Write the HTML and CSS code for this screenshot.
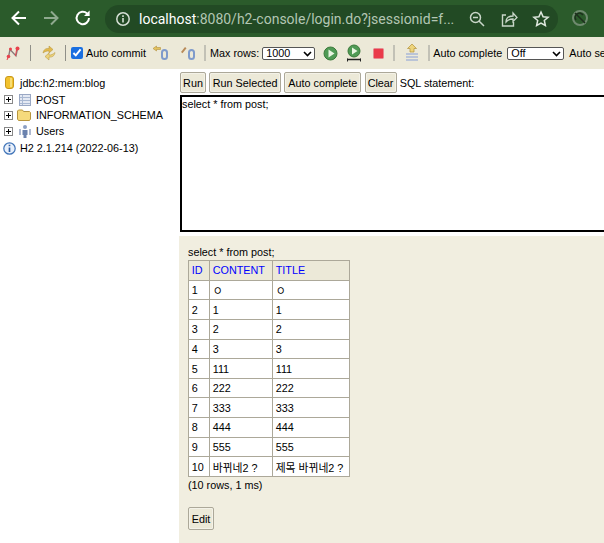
FILE: index.html
```html
<!DOCTYPE html>
<html lang="en">
<head>
<meta charset="utf-8">
<title>H2 Console</title>
<link rel="stylesheet" href="styles.css">
</head>
<body>
<header class="chrome">
  <svg class="nav-icon" width="20" height="20" viewBox="0 0 20 20"><path d="M17 10H4M10 3.500 3.500 10l6.500 6.500" fill="none" stroke="#fff" stroke-width="2"/></svg>
  <svg class="nav-icon" width="20" height="20" viewBox="0 0 20 20"><path d="M3 10h13M10 3.500l6.500 6.500-6.500 6.500" fill="none" stroke="#8fa98f" stroke-width="2"/></svg>
  <svg class="nav-icon" width="20" height="20" viewBox="0 0 20 20"><path d="M16 10a6.200 6.200 0 1 1-1.900-4.500" fill="none" stroke="#fff" stroke-width="2"/><path d="M16.600 2.500v5.600H11z" fill="#fff"/></svg>
  <div class="omnibox">
    <svg class="info" width="16" height="16" viewBox="0 0 16 16"><circle cx="8" cy="8" r="6.200" fill="none" stroke="#d5dfd5" stroke-width="1.500"/><path d="M8 7v4.500M8 4.300v1.600" stroke="#d5dfd5" stroke-width="1.600"/></svg>
    <span class="url"><span class="host">localhost</span>:8080/h2-console/login.do?jsessionid=f...</span>
    <svg class="omni-icon" width="18" height="18" viewBox="0 0 18 18"><circle cx="7.500" cy="7.500" r="5" fill="none" stroke="#c9d6c9" stroke-width="1.500"/><path d="M5 7.500h5M11 11l5 5" stroke="#c9d6c9" stroke-width="1.500"/></svg>
    <svg class="omni-icon" width="18" height="18" viewBox="0 0 18 18"><path d="M6 5H2.500v11h11v-4" fill="none" stroke="#c9d6c9" stroke-width="1.400"/><path d="M6 12c0-4 3-6 7-6V3l4 4.500-4 4V9c-3 0-5 .5-7 3z" fill="none" stroke="#c9d6c9" stroke-width="1.300"/></svg>
    <svg class="omni-icon" width="18" height="18" viewBox="0 0 18 18"><path d="m9 2 2.100 4.700 5 .5-3.800 3.300 1.100 5L9 13l-4.400 2.500 1.100-5L1.900 7.200l5-.5z" fill="none" stroke="#dfe8df" stroke-width="1.500"/></svg>
  </div>
  <svg class="ext-icon" width="20" height="20" viewBox="0 0 20 20"><circle cx="10" cy="10" r="7" fill="none" stroke="#6f8a6f" stroke-width="2"/><path d="M5 5l10 10M6 12a4 4 0 0 1 7-5" fill="none" stroke="#1d2f1d" stroke-width="1.500"/></svg>
</header>

<nav class="toolbar">
  <svg class="tool t-first" width="14" height="14" viewBox="0 0 14 14"><path d="M2.500 11 4 3.500l6 6.500 1.500-7" fill="none" stroke="#8a7a7a" stroke-width="1.300"/><circle cx="2.500" cy="10.500" r="1.800" fill="#e8424c"/><path d="M2 11.500 1 14" stroke="#e8424c"/><circle cx="4.500" cy="3" r="1.500" fill="#e8424c"/><circle cx="11.500" cy="2.500" r="2" fill="#e8424c"/><path d="M10.500 4 9.500 10" stroke="#e8424c"/></svg>
  <i class="sep sep-dark sep-a"></i>
  <svg class="tool t-refresh" width="14" height="16" viewBox="0 0 14 16"><path d="M1 8C1.500 4.500 4 3 7 3.500V1l4 3.500L7 8V6C5 5.700 3 6.500 1 8z" fill="#e2b94c" stroke="#b3923a" stroke-width=".5"/><path d="M13 7.500C12.500 11 10 12.500 7 12v3l-4-3.500L7 8v2c2 .3 4-.8 6-2.500z" fill="#ecd27a" stroke="#b3923a" stroke-width=".5"/></svg>
  <i class="sep sep-dark sep-b"></i>
  <label class="check"><input type="checkbox" checked>Auto commit</label>
  <svg class="tool t-hist" width="16" height="16" viewBox="0 0 16 16"><path d="M0 3.500 3.500 1v1.500h4v2h-4V6z" fill="#e3c25f" stroke="#a8842c" stroke-width=".5"/><rect x="9" y="5" width="5" height="9" rx="2.500" fill="none" stroke="#7f9bcb" stroke-width="2"/></svg>
  <svg class="tool t-hist2" width="16" height="16" viewBox="0 0 16 16"><path d="M1 7l4-5 1.500 1.200-4 5z" fill="#b88a58"/><rect x="9" y="5" width="5" height="9" rx="2.500" fill="none" stroke="#7f9bcb" stroke-width="2"/></svg>
  <i class="sep sep-light sep-c"></i>
  <span class="label">Max rows:</span>
  <span class="select-wrap rows">
    <select class="select"><option>1000</option></select>
    <svg class="chevron" width="9" height="6" viewBox="0 0 9 6"><path d="M1 1l3.500 3.500L8 1" fill="none" stroke="#000" stroke-width="1.600"/></svg>
  </span>
  <svg class="tool t-run" width="15" height="15" viewBox="0 0 15 15"><circle cx="7.500" cy="7.500" r="6.500" fill="#4f9a55" stroke="#3a7a3a"/><path d="M5.500 3.500v8l6-4z" fill="#e9f5e2"/></svg>
  <svg class="tool t-run2" width="18" height="18" viewBox="0 0 18 18"><circle cx="9" cy="7" r="6" fill="#4f9a55" stroke="#3a7a3a"/><path d="M7 3.500v7l5.500-3.500z" fill="#e9f5e2"/><path d="M2 15.500h14" stroke="#222" stroke-width="1.500"/><path d="M2.500 14.500v3M15.500 14.500v3" stroke="#222"/></svg>
  <svg class="tool t-stop" width="11" height="11" viewBox="0 0 11 11"><rect x=".5" y=".5" width="10" height="10" rx="1" fill="#ea3a4a" stroke="#e58a90"/></svg>
  <i class="sep sep-light sep-d"></i>
  <svg class="tool t-up" width="14" height="20" viewBox="0 0 14 20"><path d="M1 11h12M1 14h12M1 17h12" stroke="#a9b8d6" stroke-width="1.500"/><path d="M7 1l4.500 4.500H9v3.500H5V5.500H2.500z" fill="#edd47c" stroke="#b3923a" stroke-width=".7"/></svg>
  <i class="sep sep-light sep-e"></i>
  <span class="label">Auto complete</span>
  <span class="select-wrap off">
    <select class="select"><option>Off</option></select>
    <svg class="chevron" width="9" height="6" viewBox="0 0 9 6"><path d="M1 1l3.500 3.500L8 1" fill="none" stroke="#000" stroke-width="1.600"/></svg>
  </span>
  <span class="label">Auto select</span>
</nav>

<main class="main">
  <aside class="tree">
    <div class="node node-db">
      <svg width="9" height="13" viewBox="0 0 9 13"><rect x=".5" y=".5" width="8" height="12" rx="2.500" fill="#f2c22e" stroke="#c9981c"/><path d="M6 2v9" stroke="#fbe68c" stroke-width="1.500"/></svg>
      <span>jdbc:h2:mem:blog</span>
    </div>
    <div class="node">
      <i class="plus"></i>
      <svg class="ico" width="14" height="12" viewBox="0 0 14 12"><rect x="2.500" y=".5" width="11" height="11" fill="#e4e9f3" stroke="#9aa8c4"/><path d="M3 3.500h10M3 6.500h10M3 9.500h10" stroke="#a9b8d2"/><path d="M5.500 1v10" stroke="#a9b8d2"/></svg>
      <span>POST</span>
    </div>
    <div class="node">
      <i class="plus"></i>
      <svg class="ico" width="14" height="12" viewBox="0 0 14 12"><path d="M.5 10V2l1-1h4l1 1.500h6l1 1V10l-1 1.500h-11z" fill="#f6da7c" stroke="#b8963f"/></svg>
      <span>INFORMATION_SCHEMA</span>
    </div>
    <div class="node">
      <i class="plus"></i>
      <svg class="ico" width="14" height="14" viewBox="0 0 14 14"><circle cx="8" cy="3" r="2" fill="#8b9fc4"/><path d="M5.500 6h5v5h-1v3h-3v-3h-1z" fill="#6b82ae"/><path d="M3 5v6M13 5v6" stroke="#aeb9d0" stroke-width="2"/></svg>
      <span>Users</span>
    </div>
    <div class="node node-ver">
      <svg width="13" height="13" viewBox="0 0 13 13"><circle cx="6.500" cy="6.500" r="5.700" fill="#e8f0fb" stroke="#3f73b8" stroke-width="1.200"/><path d="M6.500 5.500v4.500M6.500 2.700v1.600" stroke="#2e5ea6" stroke-width="1.700"/></svg>
      <span>H2 2.1.214 (2022-06-13)</span>
    </div>
  </aside>
  <section class="work">
    <div class="actions">
      <button class="btn b-run">Run</button>
      <button class="btn b-sel">Run Selected</button>
      <button class="btn b-auto">Auto complete</button>
      <button class="btn b-clear">Clear</button>
      <span class="label">SQL statement:</span>
    </div>
    <div class="sql">select * from post;</div>
    <div class="result">
      <div class="query">select * from post;</div>
      <table class="grid">
        <thead><tr><th>ID</th><th>CONTENT</th><th>TITLE</th></tr></thead>
        <tbody>
          <tr><td>1</td><td>ㅇ</td><td>ㅇ</td></tr>
          <tr><td>2</td><td>1</td><td>1</td></tr>
          <tr><td>3</td><td>2</td><td>2</td></tr>
          <tr><td>4</td><td>3</td><td>3</td></tr>
          <tr><td>5</td><td>111</td><td>111</td></tr>
          <tr><td>6</td><td>222</td><td>222</td></tr>
          <tr><td>7</td><td>333</td><td>333</td></tr>
          <tr><td>8</td><td>444</td><td>444</td></tr>
          <tr><td>9</td><td>555</td><td>555</td></tr>
          <tr><td>10</td><td>바뀌네2 ?</td><td>제목 바뀌네2 ?</td></tr>
        </tbody>
      </table>
      <div class="count">(10 rows, 1 ms)</div>
      <button class="btn btn-edit">Edit</button>
    </div>
  </section>
</main>
</body>
</html>
```

FILE: styles.css
```css
* { box-sizing: border-box; }
html, body { margin: 0; height: 100%; overflow: hidden; }
body {
  width: 604px; height: 543px;
  background: #fff; color: #000;
  font: 10.800px "Liberation Sans", "Noto Sans CJK KR", sans-serif;
  display: flex; flex-direction: column;
}
.chrome {
  height: 37px; flex: none; background: #2b5b2b;
  display: flex; align-items: center; padding: 0 0 1px 9px; gap: 12px;
  overflow: hidden;
}
.nav-icon { flex: none; }
.omnibox {
  flex: none; width: 453px; height: 28px; border-radius: 14px; background: #224a24;
  display: flex; align-items: center; padding: 0 9px 0 10px; margin-left: 0; margin-top: 1px;
}
.info { flex: none; }
.url { flex: 1; margin-left: 8px; font: 14px "Roboto", "Liberation Sans", sans-serif; color: #b3c6b3; white-space: nowrap; }
.host { color: #fff; }
.omni-icon { flex: none; margin-left: 14px; }
.ext-icon { flex: none; margin-left: 0; }
.toolbar {
  height: 32px; flex: none; background: #ece9d8;
  display: flex; align-items: center; padding: 0 0 0 6px; white-space: nowrap; overflow: hidden;
}
.tool { flex: none; }
.sep { flex: none; height: 16px; }
.sep-dark { width: 1px; background: #8f8f88; }
.sep-light { width: 2px; background: #c2c1b6; }
.sep-a { margin: 0 11px 0 10px; }
.sep-b { margin: 0 5px 0 9px; }
.sep-c { margin: 0 4px 0 8px; }
.sep-d { margin: 0 10px 0 9px; }
.sep-e { margin: 0 3px 0 9px; }
.check { display: flex; align-items: center; }
.check input { margin: 0 3px 0 0; width: 12px; height: 12px; accent-color: #1a6fe0; }
.t-hist { margin-left: 7px; }
.t-hist2 { margin-left: 11px; }
.label { flex: none; }
.select-wrap { position: relative; flex: none; display: block; height: 13px; }
.select {
  appearance: none; display: block; width: 100%; height: 13px; line-height: 11px;
  border: 1px solid #555; border-radius: 2px; background: #fff; color: #000;
  font-family: "Liberation Sans", sans-serif; font-size: 10.800px; padding: 0 0 0 3px;
}
.chevron { position: absolute; right: 3px; top: 4px; }
.rows { width: 53px; margin-left: 3px; }
.off { width: 57px; margin: 0 5px 0 5px; }
.t-run { margin-left: 8px; }
.t-run2 { margin-left: 7px; }
.t-stop { margin-left: 10px; }
.main { flex: 1; display: flex; min-height: 0; }
.tree { width: 179px; flex: none; padding: 6px 0 0 3px; }
.node { display: flex; align-items: center; height: 15.800px; white-space: nowrap; }
.node-db { padding-left: 2px; gap: 6px; margin-bottom: 1px; }
.node-ver { gap: 4px; margin-top: 1px; }
.plus {
  position: relative; width: 9px; height: 9px; flex: none; border: 1px solid #888; background: #fff; margin: 0 4px 0 1px;
}
.plus::before { content: ""; position: absolute; left: 1px; top: 3px; width: 5px; height: 1px; background: #000; }
.plus::after { content: ""; position: absolute; left: 3px; top: 1px; width: 1px; height: 5px; background: #000; }
.ico { flex: none; margin-right: 5px; width: 14px; }
.work { flex: 1; min-width: 0; }
.actions { display: flex; align-items: center; height: 26px; padding: 3px 0 2px 1px; gap: 3.200px; white-space: nowrap; }
.btn {
  height: 21px; padding: 0; background: #ece9d8; border: 1px solid #aca899; border-radius: 2px;
  font: 10.800px "Liberation Sans", sans-serif; color: #000; box-shadow: inset 0 0 0 1px #f4f2e8;
}
.b-run { width: 26px; }
.b-sel { width: 72px; }
.b-auto { width: 77px; }
.b-clear { width: 32px; }
.sql { height: 137px; margin-left: 1px; border: 2px solid #000; border-right: 0; padding: 1px 0; background: #fff; }
.result { margin-top: 4px; height: 307px; background: #f1eee0; padding: 10px 0 0 9px; }
.query { height: 14px; }
.grid { border-collapse: collapse; table-layout: fixed; width: 162px; background: #fff; }
.grid th, .grid td { border: 1px solid #aca899; padding: 0 0 0 2.700px; height: 19.650px; text-align: left; font-weight: normal; white-space: nowrap; overflow: hidden; }
.grid th { background: #ece9d8; color: #00f; }
.grid th:nth-child(1) { width: 21px; }
.grid th:nth-child(2) { width: 63px; }
.count { margin-top: 2px; }
.btn-edit { display: block; margin-top: 16px; width: 26px; height: 23px; }
```
